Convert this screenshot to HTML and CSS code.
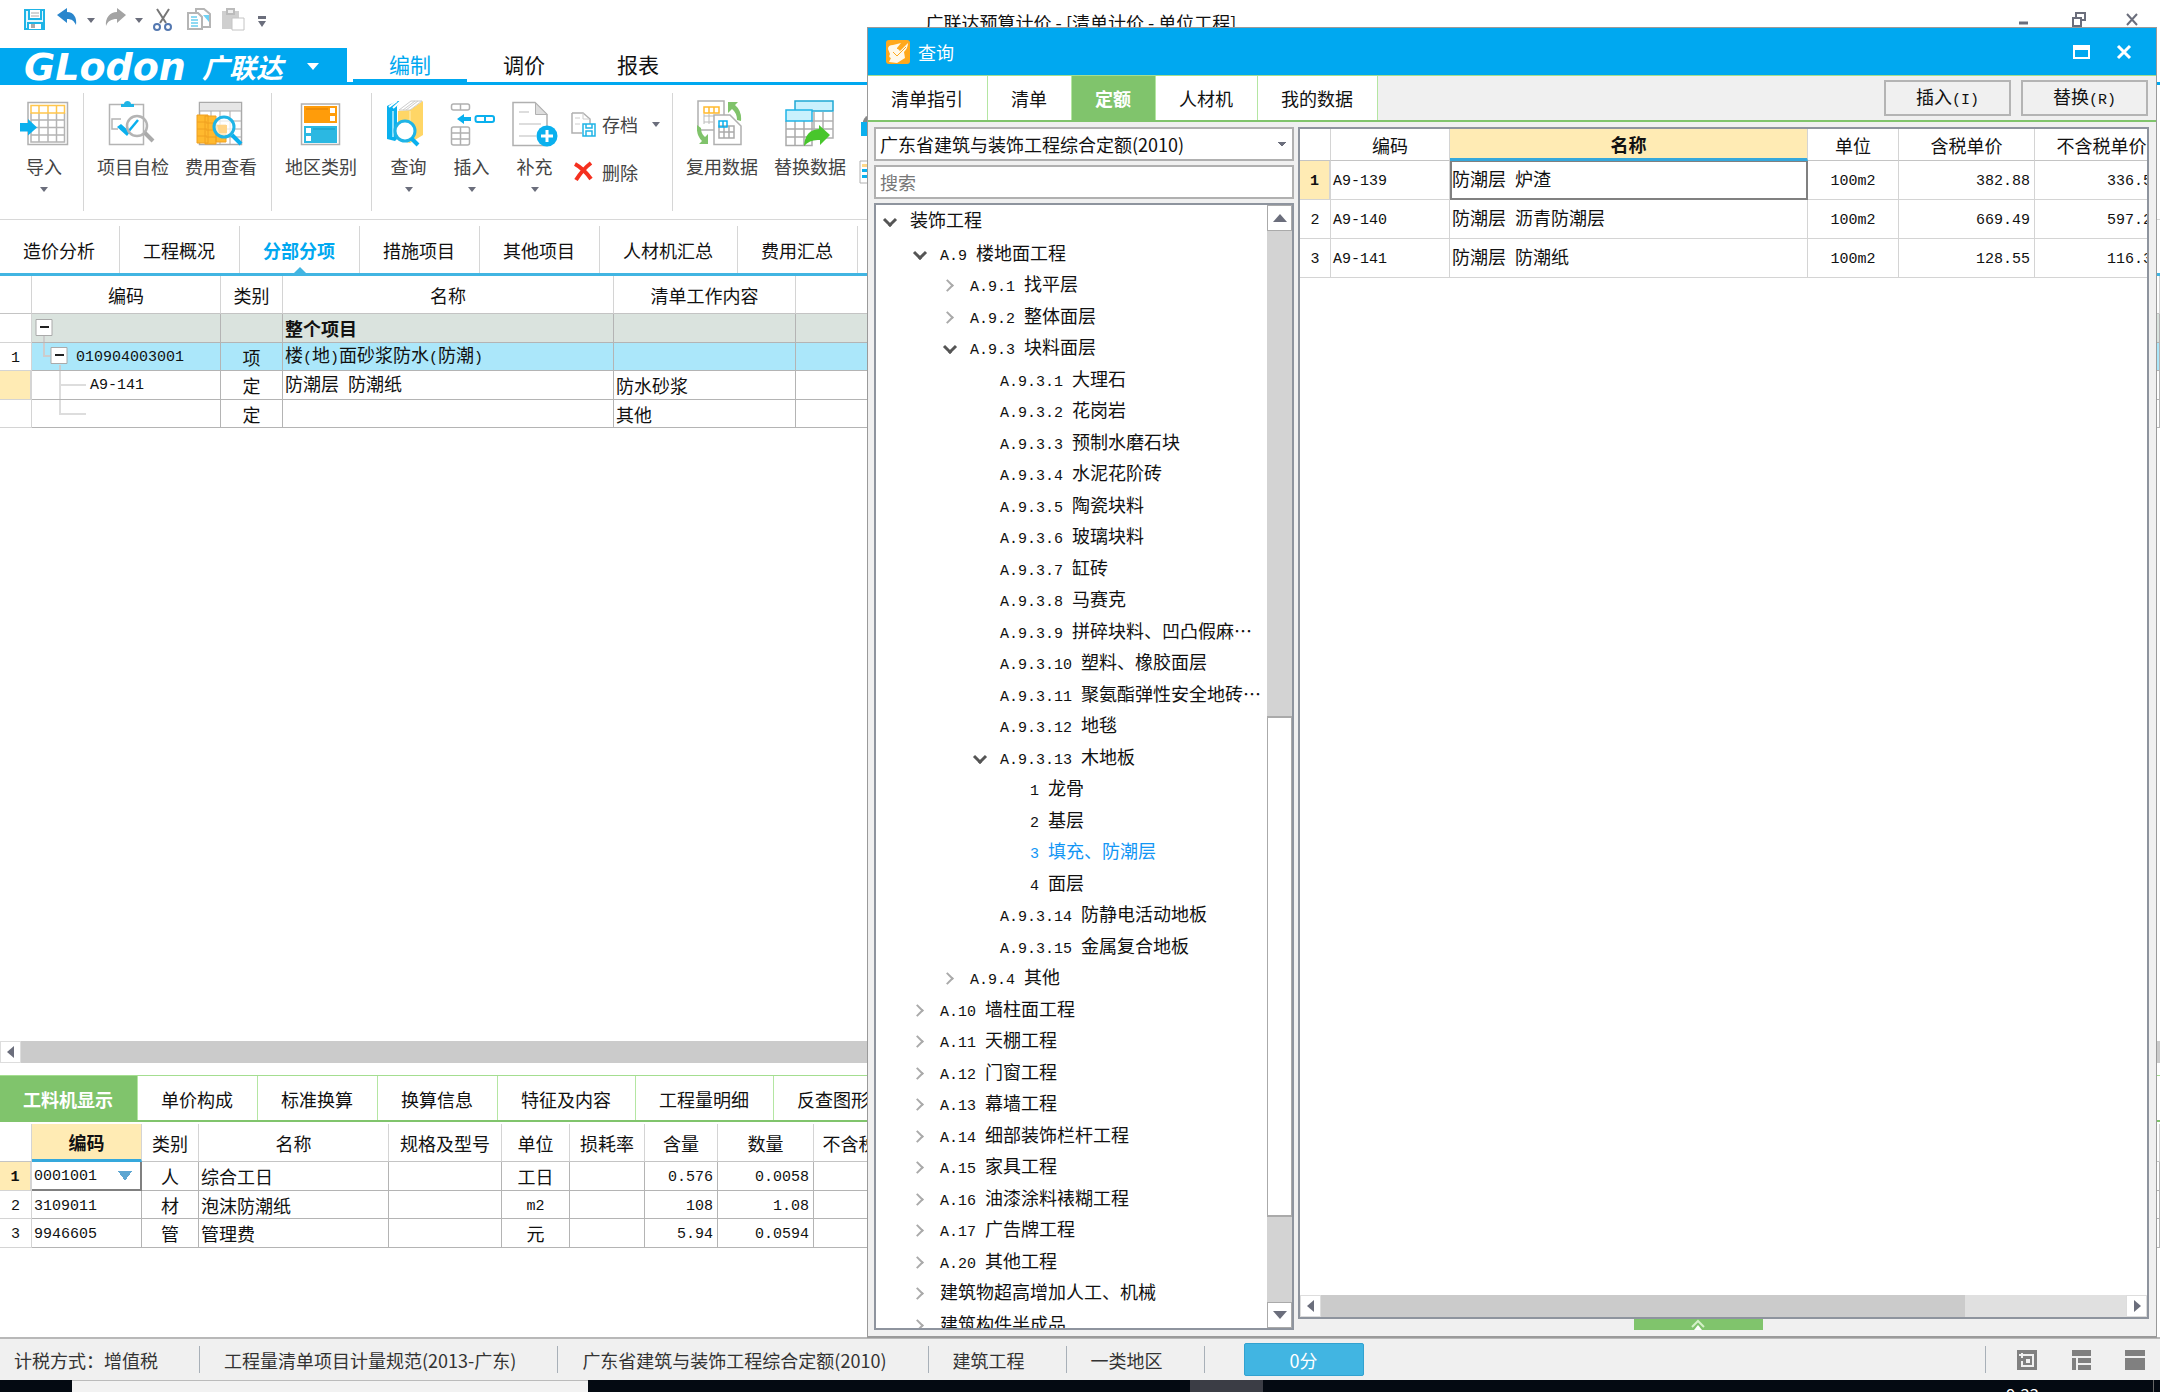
FILE: index.html
```html
<!DOCTYPE html>
<html lang="zh-CN">
<head>
<meta charset="utf-8">
<title>广联达预算计价</title>
<link rel="stylesheet" href="styles.css">
</head>
<body>
<div class="app">
  <header class="titlebar">
    <div class="quick">
      <svg width="250" height="30" viewBox="18 4 250 30" fill="none">
        <g stroke="#1fb4e6" stroke-width="2"><path d="M25 10h19v19h-19z" fill="#e4f7fd"/><path d="M29 10v9h12v-9M28 29v-6h14v6" fill="#fff"/></g><path d="M31 13h8M31 16h8" stroke="#aaa"/><path d="M31 24h4v4h-4z" fill="#aaa"/>
        <path d="M57 15l10-7v4c7 0 10 6 9 13-2-4-4-6-9-6v4z" fill="#2a86cc"/>
        <path d="M87 18h8l-4 5zM135 18h8l-4 5z" fill="#6b6e7c"/>
        <path d="M126 15l-9-7v4c-7 0-12 6-11 14 2-5 5-7 11-7v4z" fill="#a3a3a3"/>
        <path d="M157 9l9 14M169 9l-9 14" stroke="#777" stroke-width="2"/><circle cx="157" cy="27" r="3" stroke="#5478b0" stroke-width="2"/><circle cx="168" cy="27" r="3" stroke="#5478b0" stroke-width="2"/>
        <path d="M196 13v-4h8l6 5v13h-7" stroke="#b5b5b5" stroke-width="2"/><path d="M203 15h6v7z" fill="#6fd2f5"/><path d="M188 13h10l4 4v12h-14z" fill="#fff" stroke="#b5b5b5" stroke-width="2"/><path d="M191 17h6M191 20h7M191 23h7M191 26h7" stroke="#1fb4e6"/>
        <path d="M222 11h17v18h-17z" fill="#cfcfcf"/><path d="M227 9h7v5h-7z" fill="#eee" stroke="#bbb" stroke-width="2"/><path d="M232 18h12v12h-12z" fill="#fff" stroke="#c4c4c4"/>
        <path d="M258 16h8v3h-8zM258 21h8l-4 6z" fill="#6b6e7c"/>
      </svg>
    </div>
    <h1 class="apptitle">广联达预算计价 - [清单计价 - 单位工程]</h1>
    <div class="winbtns">
      <svg width="130" height="30" viewBox="2014 2 130 30" fill="none" stroke="#6b6e7c"><path d="M2019 21h9" stroke-width="3"/><path d="M2076 16v-5h9v7h-4M2073 16h8v8h-8z" stroke-width="2"/><path d="M2127 12l10 11M2137 12l-10 11" stroke-width="2"/></svg>
    </div>
  </header>

  <nav class="menubar">
    <button class="brand"><span class="logo">GLodon</span><span class="logo-cn">广联达</span><svg width="12" height="7" viewBox="0 0 12 7"><path d="M0 0h12L6 7z" fill="#fff"/></svg></button>
    <button class="menu on">编制</button><button class="menu">调价</button><button class="menu">报表</button>
  </nav>

  <section class="ribbon">
    <div class="group first">
      <button class="tool"><svg class="big" viewBox="20 99 50 48" fill="none"><path d="M29 102.500h39.500v42h-39.500z" stroke="#b0b0b0" stroke-width="1.500"/><path d="M32 113v29h33.500v-29M32 120h33.500M32 127.500h33.500M32 135h33.500M40 113v29M49 113v29M57.500 113v29" stroke="#b4b4b4" stroke-width="1.500"/><path d="M32 105.500h33.500v7.500h-33.500zM40 105v8M49 105v8M57.500 105v8" stroke="#ffc64d" stroke-width="1.500"/><path d="M21 123h8v-4l9 8.500-9 8v-4h-8z" fill="#0ab0ee"/></svg><span>导入</span><i class="caret"></i></button>
    </div>
    <div class="group">
      <button class="tool"><svg class="big" viewBox="109 99 50 48" fill="none"><path d="M110.500 104.500h34v40h-34z" stroke="#b4b4b4" stroke-width="1.500"/><path d="M122 107v-3h3c0-4 7-4 7 0h3v3z" fill="#1fb4e6"/><path d="M122 119h-9v10h6" stroke="#b4b4b4" stroke-width="1.500"/><path d="M118 127l10 9 3-4-9-8z" fill="#0ab0ee"/><path d="M129 132l10-12" stroke="#0ab0ee" stroke-width="2.500"/><circle cx="138" cy="126" r="10" stroke="#b4b4b4" stroke-width="2.500"/><path d="M146 133l8 8" stroke="#aaa" stroke-width="4"/></svg><span>项目自检</span></button>
      <button class="tool"><svg class="big" viewBox="197 99 50 48" fill="none"><path d="M200.500 102.500h42v42h-42z" stroke="#aaa" stroke-width="1.500"/><path d="M201 103h41v8h-41z" fill="#e6e6e6"/><path d="M201 111h41M212 111v33M221 111v33M231 111v33M201 121h41M201 129h41M201 137h41" stroke="#aaa"/><path d="M198 115h11v28h-11zM206 116h11v28h-11zM217 125h10v17h-10z" fill="#ffb92e" stroke="#f0a020"/><path d="M198 122h10M198 129h10M198 136h10M207 123h10M207 130h10M207 137h10" stroke="#f0a020"/><circle cx="225" cy="127" r="10" fill="#fff" fill-opacity=".7" stroke="#1fb4e6" stroke-width="3"/><path d="M218 125h10v8h-8z" fill="#ffd58a"/><path d="M233 135l9 9" stroke="#0ab0ee" stroke-width="4"/></svg><span>费用查看</span></button>
    </div>
    <div class="group">
      <button class="tool"><svg class="big" viewBox="298 99 50 48" fill="none"><path d="M303.500 104h38v40.500h-38z" stroke="#b0b0b0" stroke-width="1.500"/><path d="M306 106h33v17h-33z" fill="#ff9c0a"/><path d="M332 108h5v5h-5zM332 116h5v5h-5z" fill="#fff"/><path d="M308 109h22" stroke="#e07f00"/><path d="M306 126h33v17h-33z" fill="#2bb8e2"/><path d="M308 128h5v5h-5zM308 136h5v5h-5z" fill="#fff"/><path d="M315 129h22" stroke="#1698c4"/></svg><span>地区类别</span></button>
    </div>
    <div class="group">
      <button class="tool narrow"><svg class="big" viewBox="386 99 50 48" fill="none"><path d="M389 106l10-5h3l-3 5v33l-2 2-8-2z" fill="#0ab0ee"/><path d="M395 111v26" stroke="#8fe0fa" stroke-width="2"/><path d="M391 107l8-6M395 108l8-7" stroke="#fff" stroke-width="2"/><path d="M400 111l12-1 13-9v34l-13 8-12-3z" fill="#ffd666"/><path d="M401 110l12-9h11l-12 9z" fill="#fff" stroke="#ccc"/><path d="M405 110l12-9M408 110l12-9" stroke="#ccc"/><path d="M412 111v31" stroke="#fff0b8"/><circle cx="406" cy="131" r="10" fill="#fff" stroke="#1fb4e6" stroke-width="3" transform="translate(1 0)"/><circle cx="407" cy="131" r="0"/><path d="M413 138l7 7" stroke="#0ab0ee" stroke-width="4"/></svg><span>查询</span><i class="caret"></i></button>
      <button class="tool narrow"><svg class="big" viewBox="449 99 50 48" fill="none" stroke="#b0b0b0" stroke-width="1.500"><rect x="453.500" y="104" width="18" height="6" rx="2"/><path d="M462.500 104v6"/><rect x="453.500" y="127" width="18" height="18" rx="2"/><path d="M462.500 127v18M453 133h18M453 139h18"/><rect x="477.500" y="116" width="18.500" height="6" rx="2" stroke="#0ab0ee" stroke-width="2"/><path d="M487 116v6" stroke="#0ab0ee" stroke-width="2"/><path d="M459 119l7-5v3h7v4h-7v3z" fill="#0ab0ee" stroke="none"/></svg><span>插入</span><i class="caret"></i></button>
      <button class="tool narrow"><svg class="big" viewBox="512 99 50 48" fill="none"><path d="M515 102.500h22l12 12v31h-34z" stroke="#b0b0b0" stroke-width="1.500"/><path d="M537.500 103v11.500h11.500z" fill="#ddd" stroke="#b0b0b0"/><path d="M521 112h10M521 124h22M521 136h17" stroke="#ddd" stroke-width="2"/><circle cx="549" cy="136" r="10.500" fill="#0ab0ee"/><path d="M549 130v12M543 136h12" stroke="#fff" stroke-width="3"/></svg><span>补充</span><i class="caret"></i></button>
      <div class="stack">
        <button class="mini"><svg width="26" height="26" viewBox="573 111 26 26" fill="none"><path d="M575 113h11l7 6v5M585 133h-10v-20" stroke="#b0b0b0" stroke-width="1.500"/><path d="M578 118h5M578 124h5M586 113v6h6" stroke="#ccc"/><path d="M586 124h12v12h-12zM589 124v4h6v-4M589 136v-5h6v5" stroke="#1fb4e6" stroke-width="1.500"/></svg><span>存档</span><i class="caret"></i></button>
        <button class="mini"><svg width="26" height="26" viewBox="573 160 26 26" fill="none"><path d="M578 165q9 5 16 15M594 164q-8 6-15 17" stroke="#f5301f" stroke-width="4"/></svg><span>删除</span></button>
      </div>
    </div>
    <div class="group last">
      <button class="tool"><svg class="big" viewBox="700 99 50 48" fill="none"><path d="M701 101h26v29h-26z" stroke="#b0b0b0" stroke-width="1.500"/><path d="M707 107h15v6h-15zM712 107v6M717 107v6" stroke="#ffb92e" stroke-width="1.500"/><path d="M707 116h15M707 122h9M712 114v10M707 114v10" stroke="#bbb"/><path d="M717 115h16l11 11v18.500h-27z" fill="#fff" stroke="#b0b0b0" stroke-width="1.500"/><path d="M722 126h15v12h-15zM722 132h15M727 126v12M732 126v12" stroke="#aaa" stroke-width="1.500"/><path d="M722 121h8v6h-8zM726 121v6" stroke="#0ab0ee" stroke-width="1.500"/><path d="M731 102h10l-3 3q7 6 6 16l-4-1q0-7-5-11l-4 4zM711 144h-9l3-3q-6-6-5-16l4 3q0 6 4 9l3-3z" fill="#80c36b"/></svg><span>复用数据</span></button>
      <button class="tool"><svg class="big" viewBox="787 99 50 48" fill="none"><path d="M797 112v26h38v-26M797 121h38M797 129h38M806 112v26M816 112v26M825 112v26" stroke="#b0b0b0" stroke-width="1.500"/><path d="M788 121h26v24.500h-26z" fill="#fff"/><path d="M788 121v24.500h26v-24M788 129h26M788 137h26M797 121v24M806 121v24" stroke="#aaa" stroke-width="1.500"/><path d="M797 101h38v10h-38z" fill="#c9f1fd" stroke="#1fa8d4" stroke-width="1.500"/><path d="M788 110h26v11h-26z" fill="#c9f1fd" stroke="#1fb4e6" stroke-width="1.500"/><path d="M806 146q1-16 15-17v-4l11 10-10 10v-5q-10-1-16 6z" fill="#48c62c"/></svg><span>替换数据</span></button>
      <div class="edge"><svg width="24" height="90" viewBox="859 111 24 90"><path d="M865 121q2-6 8-6v8h-8z" fill="#888"/><path d="M863 122h16v14h-16z" fill="#0ab0ee"/><path d="M862 161h18v22h-18z" fill="#fff" stroke="#b0b0b0"/><path d="M864 164h12v3h-12z" fill="#ffd88a"/><path d="M864 169h12v3h-12zM864 175h12v3h-12z" fill="#0ab0ee"/></svg></div>
    </div>
  </section>

  <nav class="pagetabs">
    <button>造价分析</button><button>工程概况</button><button class="on">分部分项</button><button>措施项目</button><button>其他项目</button><button>人材机汇总</button><button>费用汇总</button>
  </nav>

  <main class="sheet">
    <table class="grid">
      <colgroup><col class="w32"><col class="w189"><col class="w62"><col class="w331"><col class="w182"><col></colgroup>
      <thead><tr><th></th><th>编码</th><th>类别</th><th>名称</th><th>清单工作内容</th><th></th></tr></thead>
      <tbody>
        <tr class="total"><td></td><td class="node"><svg width="44" height="28" viewBox="33 315 44 28"><path d="M45 337v6" stroke="#ccc" stroke-width="2"/><path d="M37 320.500h16v16h-16z" fill="#fff" stroke="#aaa"/><path d="M41 328h9" stroke="#222" stroke-width="2"/></svg></td><td></td><td>整个项目</td><td></td><td></td></tr>
        <tr class="picked"><td class="num m">1</td><td class="node"><svg width="44" height="27" viewBox="33 344 44 27"><path d="M45 344v13h6M61 366v5" fill="none" stroke="#ccc" stroke-width="2"/><path d="M52 348.500h16v16h-16z" fill="#fff" stroke="#aaa"/><path d="M56 356h9" stroke="#222" stroke-width="2"/></svg><span class="m">010904003001</span></td><td class="mid">项</td><td>楼<span class="m">(</span>地<span class="m">)</span>面砂浆防水<span class="m">(</span>防潮<span class="m">)</span></td><td></td><td></td></tr>
        <tr><td class="mark"></td><td class="node"><svg width="58" height="28" viewBox="33 371 58 28"><path d="M61 371v28M61 385h26" stroke="#ddd" stroke-width="2"/></svg><span class="m">A9-141</span></td><td class="mid">定</td><td>防潮层<span class="m"> </span>防潮纸</td><td>防水砂浆</td><td></td></tr>
        <tr><td></td><td class="node"><svg width="58" height="27" viewBox="33 399 58 27"><path d="M61 399v14h26" fill="none" stroke="#ddd" stroke-width="2"/></svg></td><td class="mid">定</td><td></td><td>其他</td><td></td></tr>
      </tbody>
    </table>
  </main>
  <div class="hbar"><button class="arrow" aria-label="向左"><svg width="8" height="12" viewBox="0 0 8 12"><path d="M7 0v12L0 6z" fill="#6b6e7c"/></svg></button><div class="thumb"></div></div>

  <nav class="green detailtabs">
    <button class="on">工料机显示</button><button>单价构成</button><button>标准换算</button><button>换算信息</button><button>特征及内容</button><button>工程量明细</button><button>反查图形工程量</button>
  </nav>
  <section class="detail">
    <table class="grid">
      <colgroup><col class="w32"><col class="w110"><col class="w57"><col class="w190"><col class="w113"><col class="w68"><col class="w75"><col class="w73"><col class="w96"><col class="w108"><col></colgroup>
      <thead><tr><th></th><th class="hot">编码</th><th>类别</th><th>名称</th><th>规格及型号</th><th>单位</th><th>损耗率</th><th>含量</th><th>数量</th><th>不含税单价</th><th></th></tr></thead>
      <tbody>
        <tr><td class="num m mark">1</td><td class="edit"><select class="m" aria-label="编码"><option>0001001</option></select></td><td class="mid">人</td><td>综合工日</td><td></td><td class="mid">工日</td><td></td><td class="val m">0.576</td><td class="val m">0.0058</td><td></td><td></td></tr>
        <tr><td class="num m">2</td><td class="m">3109011</td><td class="mid">材</td><td>泡沫防潮纸</td><td></td><td class="mid m">m2</td><td></td><td class="val m">108</td><td class="val m">1.08</td><td></td><td></td></tr>
        <tr><td class="num m">3</td><td class="m">9946605</td><td class="mid">管</td><td>管理费</td><td></td><td class="mid">元</td><td></td><td class="val m">5.94</td><td class="val m">0.0594</td><td></td><td></td></tr>
      </tbody>
    </table>
  </section>

  <footer class="status">
    <span>计税方式：增值税</span><span>工程量清单项目计量规范(2013-广东)</span><span>广东省建筑与装饰工程综合定额(2010)</span><span>建筑工程</span><span>一类地区</span>
    <button class="score">0分</button>
    <div class="views">
      <svg width="128" height="20" viewBox="2017 1350 128 20"><path d="M2017 1350h20v20h-20zM2072 1350h19v6h-19zM2072 1358h4v12h-4zM2078 1358h13v5h-13zM2078 1365h13v5h-13zM2125 1350h20v6h-20zM2125 1358h20v12h-20z" fill="#808080"/><path d="M2023 1355h10v11h-11v-5M2019 1355h4M2022 1353v5" fill="none" stroke="#f0f0f0" stroke-width="2"/><path d="M2026 1359h4v4h-4z" fill="#f0f0f0"/></svg>
    </div>
  </footer>
  <div class="taskbar"><div class="active"></div><div class="idle"></div><span class="clock">9:33</span></div>
</div>

<section class="dialog" aria-label="查询">
  <header class="dlgtitle">
    <svg width="24" height="24" viewBox="0 0 24 24"><rect width="24" height="24" rx="3" fill="#ffa81c"/><path d="M2 9q0-4 5-4l8-2-4 5 3 3 8-8q0 5-4 9l1 6-8 5-8-1 2-4q-3-1-1-4z" fill="#fff8ea"/><path d="M7 12l4 4 9-9M11 9l4-4" fill="none" stroke="#ffa81c"/></svg>
    <h2>查询</h2>
    <svg class="ctl" width="62" height="22" viewBox="0 0 62 22" fill="none" stroke="#fff"><path d="M2 5h15v12h-15z" stroke-width="2"/><path d="M2 7h15" stroke-width="4"/><path d="M46 5l12 12M58 5l-12 12" stroke-width="3"/></svg>
  </header>
  <nav class="green dlgtabs">
    <button>清单指引</button><button>清单</button><button class="on">定额</button><button>人材机</button><button>我的数据</button>
    <div class="acts"><button>插入<span class="m">(I)</span></button><button>替换<span class="m">(R)</span></button></div>
  </nav>
  <div class="panes">
    <div class="left">
      <select class="box lib" aria-label="定额库"><option>广东省建筑与装饰工程综合定额(2010)</option></select>
      <input class="box" type="text" placeholder="搜索" aria-label="搜索">
      <div class="treebox">
        <ul class="tree">
          <li class="l0 open">装饰工程</li>
          <li class="l1 open"><span class="m">A.9 </span>楼地面工程</li>
          <li class="l2 shut"><span class="m">A.9.1 </span>找平层</li>
          <li class="l2 shut"><span class="m">A.9.2 </span>整体面层</li>
          <li class="l2 open"><span class="m">A.9.3 </span>块料面层</li>
          <li class="l3"><span class="m">A.9.3.1 </span>大理石</li>
          <li class="l3"><span class="m">A.9.3.2 </span>花岗岩</li>
          <li class="l3"><span class="m">A.9.3.3 </span>预制水磨石块</li>
          <li class="l3"><span class="m">A.9.3.4 </span>水泥花阶砖</li>
          <li class="l3"><span class="m">A.9.3.5 </span>陶瓷块料</li>
          <li class="l3"><span class="m">A.9.3.6 </span>玻璃块料</li>
          <li class="l3"><span class="m">A.9.3.7 </span>缸砖</li>
          <li class="l3"><span class="m">A.9.3.8 </span>马赛克</li>
          <li class="l3"><span class="m">A.9.3.9 </span>拼碎块料、凹凸假麻…</li>
          <li class="l3"><span class="m">A.9.3.10 </span>塑料、橡胶面层</li>
          <li class="l3"><span class="m">A.9.3.11 </span>聚氨酯弹性安全地砖…</li>
          <li class="l3"><span class="m">A.9.3.12 </span>地毯</li>
          <li class="l3 open"><span class="m">A.9.3.13 </span>木地板</li>
          <li class="l4"><span class="m">1 </span>龙骨</li>
          <li class="l4"><span class="m">2 </span>基层</li>
          <li class="l4 sel"><span class="m">3 </span>填充、防潮层</li>
          <li class="l4"><span class="m">4 </span>面层</li>
          <li class="l3"><span class="m">A.9.3.14 </span>防静电活动地板</li>
          <li class="l3"><span class="m">A.9.3.15 </span>金属复合地板</li>
          <li class="l2 shut"><span class="m">A.9.4 </span>其他</li>
          <li class="l1 shut"><span class="m">A.10 </span>墙柱面工程</li>
          <li class="l1 shut"><span class="m">A.11 </span>天棚工程</li>
          <li class="l1 shut"><span class="m">A.12 </span>门窗工程</li>
          <li class="l1 shut"><span class="m">A.13 </span>幕墙工程</li>
          <li class="l1 shut"><span class="m">A.14 </span>细部装饰栏杆工程</li>
          <li class="l1 shut"><span class="m">A.15 </span>家具工程</li>
          <li class="l1 shut"><span class="m">A.16 </span>油漆涂料裱糊工程</li>
          <li class="l1 shut"><span class="m">A.17 </span>广告牌工程</li>
          <li class="l1 shut"><span class="m">A.20 </span>其他工程</li>
          <li class="l1 shut">建筑物超高增加人工、机械</li>
          <li class="l1 shut">建筑构件半成品</li>
        </ul>
        <div class="vbar">
          <button aria-label="向上"><svg width="14" height="8" viewBox="0 0 14 8"><path d="M0 8h14L7 0z" fill="#6b6e7c"/></svg></button>
          <div class="before"></div><div class="vthumb"></div><div class="after"></div>
          <button aria-label="向下"><svg width="14" height="8" viewBox="0 0 14 8"><path d="M0 0h14L7 8z" fill="#6b6e7c"/></svg></button>
        </div>
      </div>
    </div>
    <div class="right">
      <div class="results">
        <table class="grid light">
          <colgroup><col class="w31"><col class="w119"><col class="w358"><col class="w91"><col class="w136"><col class="w134"></colgroup>
          <thead><tr><th></th><th>编码</th><th class="hot">名称</th><th>单位</th><th>含税单价</th><th>不含税单价</th></tr></thead>
          <tbody>
            <tr><td class="num m mark">1</td><td class="m">A9-139</td><td class="focus">防潮层<span class="m"> </span>炉渣</td><td class="mid m">100m2</td><td class="val m">382.88</td><td class="val m">336.50</td></tr>
            <tr><td class="num m">2</td><td class="m">A9-140</td><td>防潮层<span class="m"> </span>沥青防潮层</td><td class="mid m">100m2</td><td class="val m">669.49</td><td class="val m">597.20</td></tr>
            <tr><td class="num m">3</td><td class="m">A9-141</td><td>防潮层<span class="m"> </span>防潮纸</td><td class="mid m">100m2</td><td class="val m">128.55</td><td class="val m">116.30</td></tr>
          </tbody>
        </table>
        <div class="hbar"><button class="arrow" aria-label="向左"><svg width="8" height="12" viewBox="0 0 8 12"><path d="M7 0v12L0 6z" fill="#6b6e7c"/></svg></button><div class="thumb"></div><div class="rest"></div><button class="arrow" aria-label="向右"><svg width="8" height="12" viewBox="0 0 8 12"><path d="M1 0v12l7-6z" fill="#6b6e7c"/></svg></button></div>
      </div>
      <button class="pull" aria-label="展开"><svg width="14" height="11" viewBox="0 0 14 11"><path d="M1 8l6-6 6 6" fill="none" stroke="#d4f0c8" stroke-width="2"/><path d="M3 11l4-5 4 5z" fill="#fff"/></svg></button>
    </div>
  </div>
</section>
</body>
</html>
```

FILE: styles.css
```css
*, *::before, *::after { box-sizing: border-box; }
body {
  margin: 0;
  overflow: hidden;
  font: 18px/24px "Noto Sans CJK SC", sans-serif;
  color: #111;
  background: #fff;
}
button, select, input { font: inherit; color: inherit; margin: 0; padding: 0; border: 0; border-radius: 0; background: none; appearance: none; }
h1, h2 { margin: 0; font-size: 18px; font-weight: 400; }
svg { display: block; flex: none; }
.m { font-family: "Liberation Mono", monospace; font-size: 15px; white-space: pre; }
.app { display: flex; flex-direction: column; height: 100vh; }

/* title bar */
.titlebar { display: grid; grid-template-columns: 1fr auto 1fr; height: 48px; flex: none; padding: 4px 16px 0 18px; }
.apptitle { padding-top: 6px; }
.winbtns { justify-self: end; }

/* menu bar */
.menubar { display: flex; height: 37px; flex: none; border-bottom: 3px solid #00a8f0; }
.brand { display: flex; align-items: center; width: 347px; height: 37px; padding-left: 24px; background: #00a8f0; color: #fff; }
.logo { width: 178px; font: italic bold 38px/36px "DejaVu Sans", sans-serif; text-align: left; }
.logo-cn { width: 105px; font: italic bold 27px/36px "Noto Sans CJK SC", sans-serif; text-align: left; }
.menu { width: 114px; height: 37px; font-size: 21px; padding-bottom: 6px; }
.menu.on { margin-left: 6px; color: #00a8f0; border-bottom: 6px solid #00a8f0; padding-bottom: 0; }

/* ribbon */
.ribbon { display: flex; height: 135px; flex: none; padding: 8px 0; border-bottom: 1px solid #d8d8d8; }
.group { display: flex; padding: 0 6px 0 5px; border-right: 1px solid #d6d6d6; color: #444; }
.group.first { width: 84px; padding: 0 0 0 5px; }
.group.first .tool { width: 78px; }
.group.last { border: 0; }
.tool { display: flex; flex-direction: column; align-items: center; width: 88px; padding-top: 6px; }
.tool.narrow { width: 63px; }
.big { width: 50px; height: 48px; margin-bottom: 7px; }
.caret { width: 0; height: 0; border: 4px solid transparent; border-top: 5px solid #6b6e7c; border-bottom: 0; }
.tool .caret { margin-top: 9px; }
.stack { display: flex; flex-direction: column; gap: 24px; width: 100px; padding: 19px 0 0 4px; }
.mini { display: flex; align-items: center; gap: 6px; height: 24px; }
.mini .caret { margin-left: 8px; }
.edge { padding: 18px 0 0 3px; }

/* page tabs */
.pagetabs { display: flex; height: 56px; flex: none; border-bottom: 3px solid #41b5e2; }
.pagetabs button { position: relative; height: 47px; margin-top: 6px; padding: 0 24px 0 23px; border-right: 1px solid #d6d6d6; }
.pagetabs .on { color: #00a8f0; font-weight: 700; }
.pagetabs .on::after { content: ""; position: absolute; left: 54px; bottom: 0; border: 6px solid transparent; border-top: 0; border-bottom-color: #41b5e2; }

/* tables */
.grid { width: 100%; table-layout: fixed; border-collapse: separate; border-spacing: 0; }
.grid th { height: 38px; padding: 0; font-weight: 400; border-right: 1px solid #d4d4d4; border-bottom: 1px solid #c4c4c4; white-space: nowrap; }
.grid td { height: 29px; padding: 0 2px; line-height: 20px; border-right: 1px solid #b4b4b4; border-bottom: 1px solid #b4b4b4; white-space: nowrap; }
.grid tr:nth-child(even) td { height: 28px; }
.grid td.m { padding-top: 4px; }
.grid td:first-child { border-color: #d4d4d4; }
.grid .hot { background: #ffebb4; border-bottom: 3px solid #35a8dc; font-weight: 700; }
.grid .num, .grid .mid { text-align: center; }
.grid .val { text-align: right; padding-right: 4px; }
.grid .mark { background: #ffebb4; border-right: 2px solid #35a8dc; font-weight: 700; }
.grid .node { padding: 0; }
.node svg, .node .m { display: inline-block; vertical-align: middle; }
.node .m { padding-top: 2px; }
.total td { background: #dae3de; font-weight: 700; }
.picked td { background: #abe7fa; }
.total td:first-child, .picked td:first-child { background: #fff; }
.grid .edit { padding: 0; border-right: 2px solid #808080; border-bottom: 2px solid #808080; }
.edit select { display: block; width: 100%; height: 26px; padding: 2px 0 0 2px; background: linear-gradient(to bottom right, #5da6d2 50%, transparent 50%) no-repeat right 8px center / 7px 10px, linear-gradient(to bottom left, #5da6d2 50%, transparent 50%) no-repeat right 15px center / 7px 10px; }
.w31 { width: 31px; } .w32 { width: 32px; } .w57 { width: 57px; } .w62 { width: 62px; } .w68 { width: 68px; }
.w73 { width: 73px; } .w75 { width: 75px; } .w91 { width: 91px; } .w96 { width: 96px; } .w108 { width: 108px; }
.w110 { width: 110px; } .w113 { width: 113px; } .w119 { width: 119px; } .w134 { width: 134px; } .w136 { width: 136px; }
.w182 { width: 182px; } .w189 { width: 189px; } .w190 { width: 190px; } .w331 { width: 331px; } .w358 { width: 358px; }

.sheet { flex: 1; min-height: 0; overflow: hidden; }
.hbar { display: flex; height: 22px; flex: none; background: #e0e0e0; }
.arrow { display: flex; align-items: center; justify-content: center; width: 21px; background: #fff; border: 1px solid #ddd; }
.thumb { flex: 1; background: #cbcbcb; }

/* green tab strips */
.green { display: flex; height: 47px; flex: none; border-top: 1px solid #a4de90; border-bottom: 2px solid #80c46c; }
.green > button { padding: 0 24px 0 23px; border-right: 1px solid #b4e6a2; background: #fff; }
.green > .on { background: #80c46c; color: #fff; font-weight: 700; }
.detailtabs { margin-top: 12px; }
.detailtabs > button { padding-top: 2px; }
.detail { height: 215px; flex: none; padding-top: 2px; overflow: hidden; }

/* status bar */
.status { display: flex; align-items: center; height: 43px; flex: none; background: #f0f0f0; border-top: 2px solid #b8b8b8; color: #333; }
.status span { display: flex; align-items: center; height: 27px; padding: 0 41px 0 24px; border-right: 1px solid #a8b0b8; }
.status span:first-child { padding-left: 14px; }
.score { width: 120px; height: 33px; margin-left: 39px; border: 1px solid #32a2d0; border-radius: 2px; background: #41b5e2; color: #fff; }
.views { display: flex; align-items: center; height: 27px; margin-left: auto; padding: 0 15px 0 31px; border-left: 1px solid #a8b0b8; }
.taskbar { display: flex; height: 12px; flex: none; overflow: hidden; background: #040a12; }
.active { width: 516px; margin-left: 72px; background: #f2f2f2; border-top: 1px solid #bbb; }
.idle { width: 73px; margin-left: 602px; background: #3b3d45; }
.clock { margin-left: auto; padding: 3px 114px 0 0; font-size: 17px; color: #fff; border-right: 1px solid #666; margin-right: 6px; }

/* query dialog, floating above the main window */
.dialog { position: absolute; left: 867px; right: 3px; top: 27px; bottom: 54px; display: flex; flex-direction: column; background: #f0f0f0; border: 1px solid #9a9a9a; border-bottom-width: 2px; }
.dlgtitle { display: flex; align-items: center; gap: 8px; height: 47px; flex: none; padding: 0 22px 0 18px; background: #00a8f0; color: #fff; }
.ctl { margin-left: auto; }
.acts { display: flex; gap: 10px; margin-left: auto; padding: 4px 8px 4px 0; }
.acts button { width: 127px; border: 2px solid #b4b4b4; }
.panes { display: grid; grid-template-columns: 420px 1fr; gap: 4px; flex: 1; min-height: 0; padding: 5px 7px 6px 6px; }
.left { display: flex; flex-direction: column; gap: 4px; min-height: 0; }
.box { width: 100%; height: 34px; flex: none; padding: 0 4px; background: #fff; border: 2px solid #b0b0b0; }
.lib { background: linear-gradient(to bottom right, #6b6e7c 50%, transparent 50%) no-repeat right 6px center / 4px 5px, linear-gradient(to bottom left, #6b6e7c 50%, transparent 50%) no-repeat right 10px center / 4px 5px, #fff; }
.box::placeholder { color: #777; opacity: 1; }
.treebox { display: flex; flex: 1; min-height: 0; overflow: hidden; background: #fff; border: 2px solid #8e949e; }
.tree { flex: 1; margin: 0; padding: 0; list-style: none; overflow: hidden; }
.tree li { height: 31px; line-height: 31px; white-space: nowrap; }
.tree li:nth-child(even) { height: 32px; line-height: 32px; }
.tree li:first-child { line-height: 29px; }
.l0 { padding-left: 34px; } .l1 { padding-left: 64px; } .l2 { padding-left: 94px; } .l3 { padding-left: 124px; } .l4 { padding-left: 154px; }
.open::before, .shut::before { content: ""; display: inline-block; width: 10px; height: 10px; margin: 0 15px 5px -25px; border: solid #555; border-width: 0 3px 3px 0; transform: rotate(45deg); vertical-align: middle; }
.shut::before { width: 9px; height: 9px; margin: 0 18px 2px -27px; border-color: #aaa; border-width: 0 2px 2px 0; transform: rotate(-45deg); }
.sel { color: #1296f5; }
.vbar { display: flex; flex-direction: column; width: 25px; background: #d3d3d3; }
.vbar button { display: flex; align-items: center; justify-content: center; height: 26px; background: #fff; border: 1px solid #aaa; }
.before { flex: 488; }
.vthumb { flex: 500; background: #fff; border: 1px solid #aaa; border-width: 2px 1px; }
.after { flex: 85; }
.right { display: flex; flex-direction: column; align-items: center; min-width: 0; min-height: 0; }
.results { display: flex; flex-direction: column; flex: 1; width: 100%; min-height: 0; overflow: hidden; background: #fff; border: 2px solid #8e949e; }
.light { width: 869px; }
.light th { height: 32px; }
.light td, .light tr:nth-child(even) td { height: 39px; border-color: #d4d4d4; }
.light td:last-child { padding-right: 7px; }
.light .focus { padding: 0; border: 2px solid #808080; border-top-width: 1px; }
.results .hbar { margin-top: auto; }
.results .thumb { flex: 647; }
.rest { flex: 162; }
.pull { display: flex; justify-content: center; width: 129px; height: 11px; margin-right: 51px; background: #80c46c; }
```
